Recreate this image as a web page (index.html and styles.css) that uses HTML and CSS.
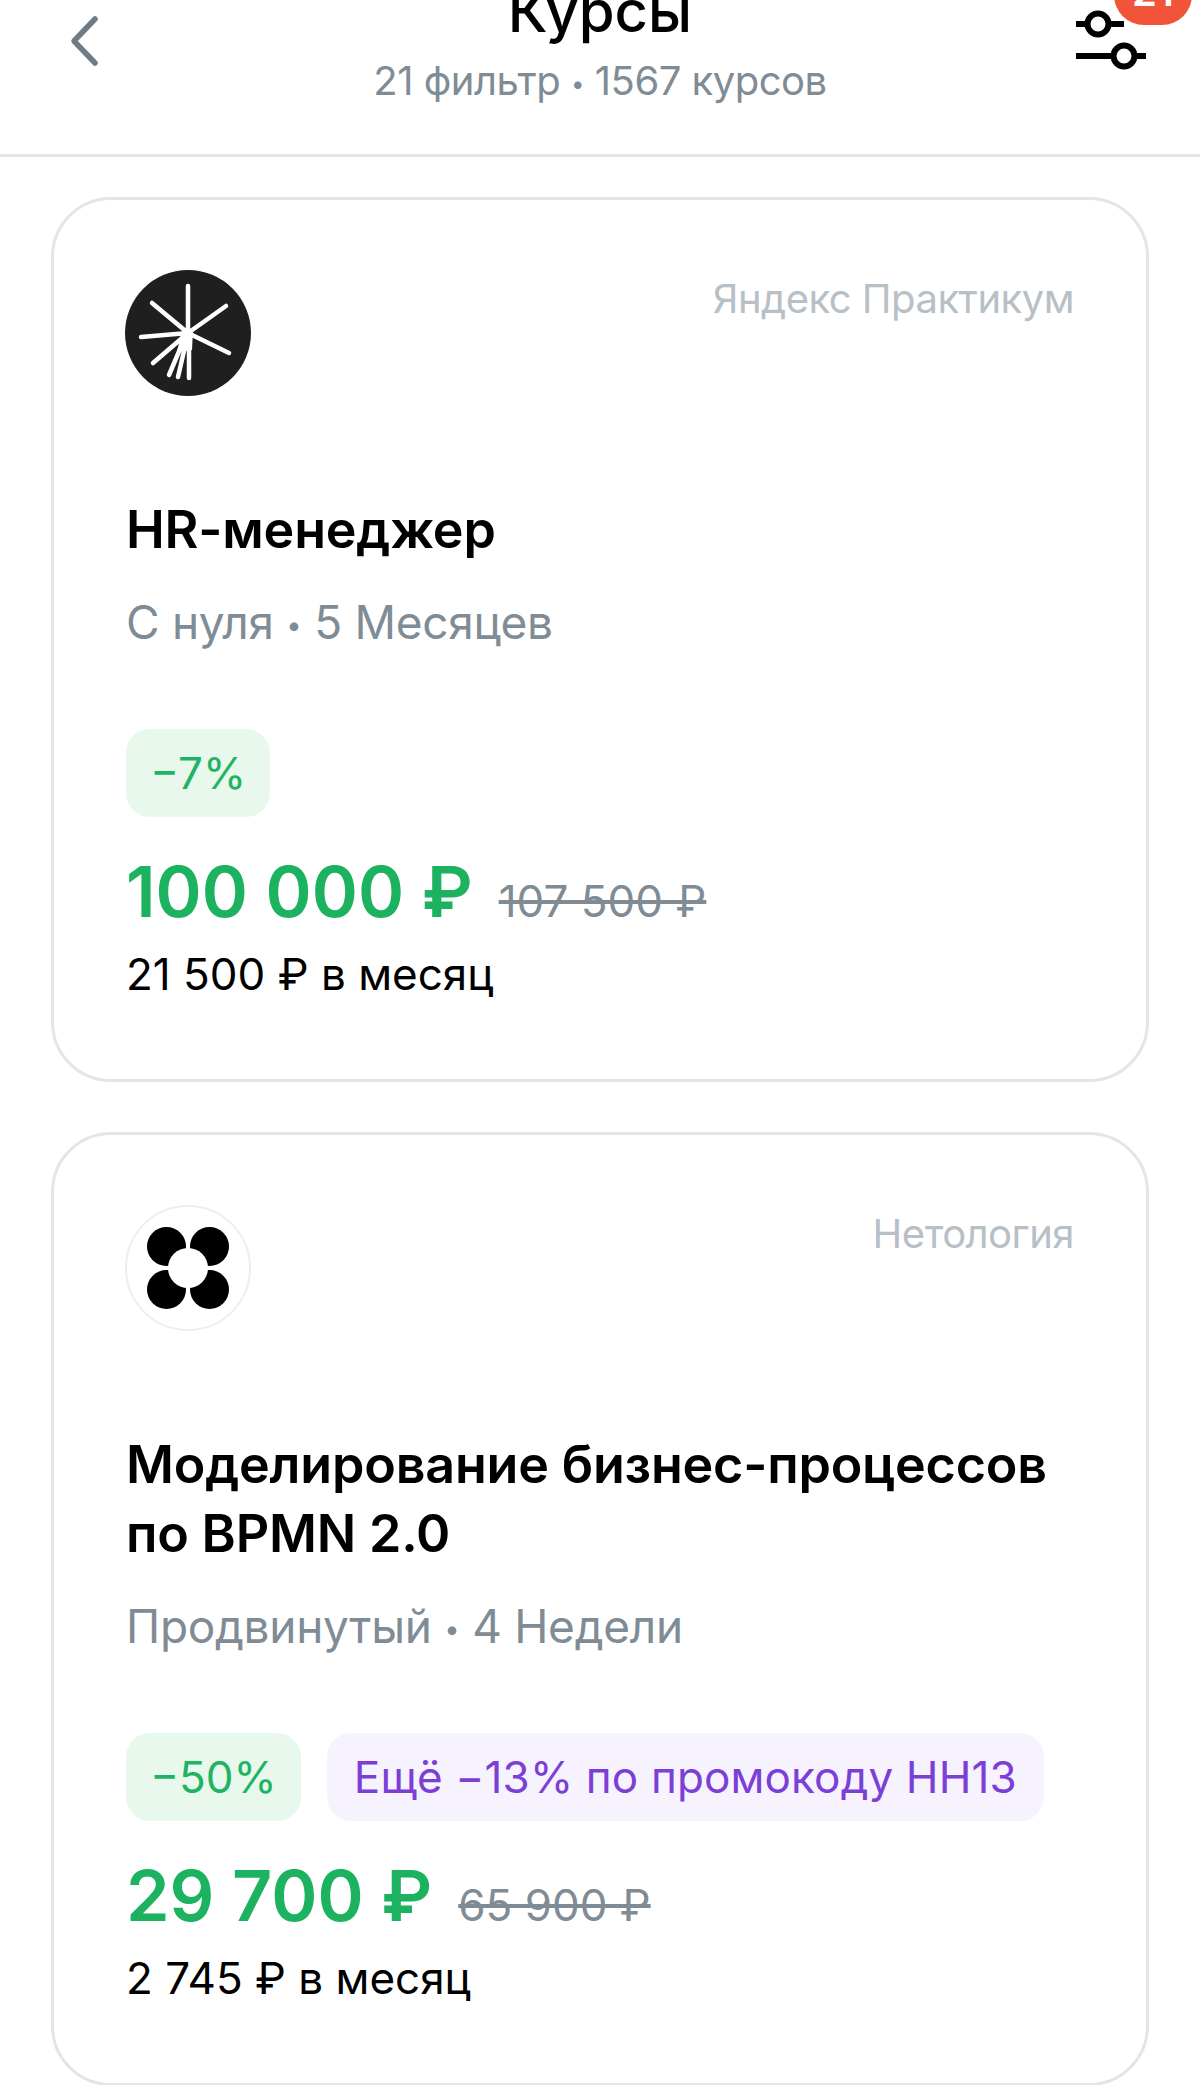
FILE: index.html
```html
<!DOCTYPE html>
<html lang="ru">
<head>
<meta charset="utf-8">
<title>Курсы</title>
<link rel="stylesheet" href="styles.css">
</head>
<body>
<div class="page">
  <header class="header">
    <svg class="back" viewBox="0 0 32 52" width="32" height="52"><path d="M25 4 L4 26 L25 48" fill="none" stroke="#6f7c86" stroke-width="5.500" stroke-linecap="round" stroke-linejoin="round"/></svg>
    <div class="head-text">
      <div class="head-title">Курсы</div>
      <div class="head-sub">21 фильтр <span class="dot">•</span> 1567 курсов</div>
    </div>
    <div class="filter">
      <svg class="filter-icon" viewBox="0 0 72 70" width="72" height="70"><g fill="none" stroke="#000" stroke-width="6"><path d="M0 24H11M33 24H48"/><circle cx="22" cy="24" r="10.500"/><path d="M0 56H37M59 56H70"/><circle cx="48" cy="56" r="10.500"/></g></svg>
      <span class="badge">21</span>
    </div>
  </header>
  <main class="list">
    <article class="card">
      <div class="card-top">
        <svg class="logo" viewBox="0 0 126 126" width="126" height="126"><circle cx="63" cy="63" r="63" fill="#1f1f1f"/><path d="M56 64L68 60L67 80L52 82Z" fill="#fff"/><g stroke="#fff" stroke-width="4.500" stroke-linecap="round" fill="none"><path d="M63 16V63M27 33L63 63M101 36L63 63M16 67L63 63M104 83L63 63M28 93L63 63M44 105L61 65M53 107L62 68M64 108V63"/></g></svg>
        <span class="provider">Яндекс Практикум</span>
      </div>
      <h2 class="name">HR-менеджер</h2>
      <p class="meta">С нуля <span class="dot">•</span> 5 Месяцев</p>
      <div class="tags"><span class="tag tag-green">−7%</span></div>
      <div class="prices"><span class="price">100 000 ₽</span><span class="old">107 500 ₽</span></div>
      <p class="monthly">21 500 ₽ в месяц</p>
    </article>
    <article class="card">
      <div class="card-top">
        <svg class="logo" viewBox="0 0 126 126" width="126" height="126"><circle cx="63" cy="63" r="62" fill="#fff" stroke="#eceeef" stroke-width="2"/><g fill="#000"><circle cx="41.500" cy="41.500" r="19.500"/><circle cx="84.500" cy="41.500" r="19.500"/><circle cx="41.500" cy="84.500" r="19.500"/><circle cx="84.500" cy="84.500" r="19.500"/></g><circle cx="63" cy="63" r="20" fill="#fff"/></svg>
        <span class="provider">Нетология</span>
      </div>
      <h2 class="name">Моделирование бизнес-процессов по BPMN 2.0</h2>
      <p class="meta">Продвинутый <span class="dot">•</span> 4 Недели</p>
      <div class="tags"><span class="tag tag-green">−50%</span><span class="tag tag-purple">Ещё −13% по промокоду HH13</span></div>
      <div class="prices"><span class="price">29 700 ₽</span><span class="old">65 900 ₽</span></div>
      <p class="monthly">2 745 ₽ в месяц</p>
    </article>
  </main>
</div>
</body>
</html>
```
FILE: styles.css
```css
* { box-sizing: border-box; }
html, body { margin: 0; padding: 0; background: #fff; }
body { font-family: Inter, "Noto Sans", sans-serif; color: #000; }
.page { width: 1200px; height: 2085px; overflow: hidden; }
.header {
  height: 157px;
  border-bottom: 3px solid #e1e6e8;
  display: grid;
  grid-template-columns: 1fr auto 1fr;
  align-items: start;
  padding: 0 51px;
}
.back { margin: 15px 0 0 19px; }
.head-text { text-align: center; margin-top: -18px; }
.head-title { font-size: 58px; line-height: 58px; font-weight: 500; }
.head-sub { font-size: 40px; line-height: 48px; color: #808c95; margin-top: 17px; letter-spacing: -0.5px; }
.dot { font-size: 0.6em; line-height: 0; vertical-align: 0.14em; }
.filter { position: relative; justify-self: end; width: 72px; height: 70px; margin-right: 1px; }
.filter-icon { display: block; }
.badge {
  position: absolute; right: -44px; top: -35px;
  background: #f25439; color: #fff;
  width: 78px; height: 60px; border-radius: 30px;
  font-size: 40px; font-weight: 600; line-height: 54px; text-align: center;
  box-shadow: 0 0 0 3px #fff;
}
.list { padding: 40px 51px 0; display: flex; flex-direction: column; gap: 50px; }
.card {
  border: 3px solid #e1e6e8;
  border-radius: 60px;
  padding: 70px 72px 78px 72px;
  background: #fff;
}
.card-top { display: flex; justify-content: space-between; align-items: flex-start; }
.logo { display: block; flex: none; margin-left: -1px; }
.provider { font-size: 40px; line-height: 44px; color: #b7c0c6; margin-top: 7px; letter-spacing: -0.5px; }
.name { margin: 99px 0 0; font-size: 52px; line-height: 69px; font-weight: 600; letter-spacing: -0.2px; }
.meta { margin: 31px 0 0; font-size: 46px; line-height: 54px; color: #808c95; letter-spacing: -0.3px; }
.tags { display: flex; gap: 26px; margin-top: 80px; }
.tag { height: 88px; border-radius: 24px; font-size: 44px; line-height: 88px; }
.tag-green { background: #e9f8ec; color: #1fb364; padding: 0 24px; }
.tag-purple { background: #f6f2fe; color: #7c3fd6; padding: 0 27px; letter-spacing: 0.15px; }
.prices { display: flex; align-items: baseline; gap: 26px; margin-top: 32px; }
.price { font-size: 70px; line-height: 86px; font-weight: 600; color: #1cb25f; }
.old { font-size: 44px; line-height: 50px; color: #808c95; text-decoration: line-through; }
.monthly { margin: 12px 0 0; font-size: 44px; line-height: 54px; color: #000; }
```
